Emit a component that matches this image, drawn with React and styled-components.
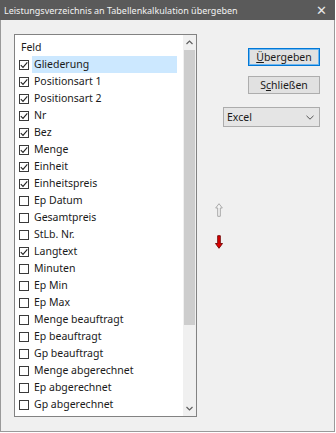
import React from "react";
import styled, { createGlobalStyle } from "styled-components";

const Global = createGlobalStyle`
  html, body { margin: 0; padding: 0; background: #ffffff; }
  body { font-family: "Noto Sans", "Open Sans", sans-serif; }
`;

const Window = styled.div`
  width: 335px;
  height: 432px;
  box-sizing: border-box;
  background: #f0f0f0;
  border: 1px solid #9a9a9a;
  border-top: none;
  display: flex;
  flex-direction: column;
`;

const TitleBar = styled.div`
  height: 20px;
  margin: 0 -1px;
  background: #5a5a5a;
  color: #f2f2f2;
  font-size: 9px;
  display: flex;
  align-items: center;
  justify-content: space-between;
  padding: 0 8px 0 4px;
`;

const Close = styled.span`
  font-size: 13px;
  color: #e8e8e8;
  line-height: 1;
`;

const Body = styled.div`
  flex: 1;
  display: flex;
  padding: 14px 0 0 13px;
`;

const ListBox = styled.div`
  width: 183px;
  height: 383px;
  box-sizing: border-box;
  border: 1px solid #828282;
  background: #ffffff;
  display: flex;
`;

const List = styled.div`
  flex: 1;
  padding: 3px 0 0 4px;
`;

const Header = styled.div`
  height: 18px;
  font-size: 10.5px;
  color: #1a1a1a;
  padding-left: 2px;
  display: flex;
  align-items: center;
`;

const Row = styled.div`
  height: 17px;
  display: flex;
  align-items: center;
  font-size: 10.5px;
  color: #1a1a1a;
`;

const Box = styled.span`
  width: 10px;
  height: 10px;
  box-sizing: border-box;
  border: 1px solid #3a3a3a;
  background: #ffffff;
  display: flex;
  align-items: center;
  justify-content: center;
  margin-right: 3px;
`;

const Label = styled.span`
  flex: 1;
  height: 17px;
  line-height: 17px;
  padding-left: 2px;
  margin-right: 6px;
  background: ${(p) => (p.$selected ? "#cce8ff" : "transparent")};
`;

const ScrollBar = styled.div`
  width: 13px;
  background: #f0f0f0;
  display: flex;
  flex-direction: column;
`;

const ScrollArrow = styled.div`
  height: 15px;
  display: flex;
  align-items: center;
  justify-content: center;
`;

const Thumb = styled.div`
  height: 275px;
  margin: 0 1px;
  background: #cdcdcd;
`;

const Track = styled.div`
  flex: 1;
`;

const Side = styled.div`
  width: 110px;
  margin-left: 13px;
  padding-top: 14px;
  display: flex;
  flex-direction: column;
`;

const Button = styled.div`
  align-self: flex-end;
  width: 72px;
  height: 18px;
  box-sizing: border-box;
  border: 1px solid ${(p) => (p.$default ? "#0078d7" : "#adadad")};
  box-shadow: ${(p) => (p.$default ? "inset 0 0 0 1px #6fb6ef" : "none")};
  background: #e1e1e1;
  font-size: 10.5px;
  color: #1a1a1a;
  display: flex;
  align-items: center;
  justify-content: center;
  margin-bottom: ${(p) => p.$gap || 0}px;
  u { text-decoration: underline; text-underline-offset: 1px; }
`;

const Select = styled.div`
  align-self: flex-end;
  width: 97px;
  height: 20px;
  box-sizing: border-box;
  border: 1px solid #acacac;
  background: #e5e5e5;
  font-size: 10.5px;
  color: #1a1a1a;
  display: flex;
  align-items: center;
  justify-content: space-between;
  padding: 0 5px 0 3px;
`;

const Arrows = styled.div`
  display: flex;
  flex-direction: column;
  align-items: flex-start;
  padding-left: 5px;
  margin-top: 76px;
  gap: 18px;
`;

const fields = [
  ["Gliederung", true],
  ["Positionsart 1", true],
  ["Positionsart 2", true],
  ["Nr", true],
  ["Bez", true],
  ["Menge", true],
  ["Einheit", true],
  ["Einheitspreis", true],
  ["Ep Datum", false],
  ["Gesamtpreis", false],
  ["StLb. Nr.", false],
  ["Langtext", true],
  ["Minuten", false],
  ["Ep Min", false],
  ["Ep Max", false],
  ["Menge beauftragt", false],
  ["Ep beauftragt", false],
  ["Gp beauftragt", false],
  ["Menge abgerechnet", false],
  ["Ep abgerechnet", false],
  ["Gp abgerechnet", false],
];

const Check = () => (
  <svg width="8" height="8" viewBox="0 0 8 8">
    <path d="M0.8 4.2 L3 6.4 L7.3 1.4" fill="none" stroke="#222" strokeWidth="1.1" />
  </svg>
);

const Chevron = ({ up }) => (
  <svg width="7" height="5" viewBox="0 0 7 5">
    <path d={up ? "M0.5 4 L3.5 1 L6.5 4" : "M0.5 1 L3.5 4 L6.5 1"} fill="none" stroke="#606060" strokeWidth="1.2" />
  </svg>
);

export default function App() {
  return (
    <>
      <Global />
      <Window>
        <TitleBar>
          <span>Leistungsverzeichnis an Tabellenkalkulation übergeben</span>
          <Close>✕</Close>
        </TitleBar>
        <Body>
          <ListBox>
            <List>
              <Header>Feld</Header>
              {fields.map(([name, checked], i) => (
                <Row key={name}>
                  <Box>{checked && <Check />}</Box>
                  <Label $selected={i === 0}>{name}</Label>
                </Row>
              ))}
            </List>
            <ScrollBar>
              <ScrollArrow>
                <Chevron up />
              </ScrollArrow>
              <Thumb />
              <Track />
              <ScrollArrow>
                <Chevron />
              </ScrollArrow>
            </ScrollBar>
          </ListBox>
          <Side>
            <Button $default $gap={10}>
              <span><u>Ü</u>bergeben</span>
            </Button>
            <Button $gap={13}>
              <span>S<u>c</u>hließen</span>
            </Button>
            <Select>
              <span>Excel</span>
              <svg width="8" height="5" viewBox="0 0 8 5">
                <path d="M0.5 0.8 L4 4.2 L7.5 0.8" fill="none" stroke="#555" strokeWidth="1" />
              </svg>
            </Select>
            <Arrows>
              <svg width="8" height="14" viewBox="0 0 8 14">
                <path d="M4 0.7 L7.3 5 L5.3 5 L5.3 13.3 L2.7 13.3 L2.7 5 L0.7 5 Z" fill="#f4f4f4" stroke="#a8a8a8" strokeWidth="1" />
              </svg>
              <svg width="8" height="14" viewBox="0 0 8 14">
                <path d="M2.7 0.7 L5.3 0.7 L5.3 8.5 L7.5 8.5 L4 13.3 L0.5 8.5 L2.7 8.5 Z" fill="#e00000" stroke="#700000" strokeWidth="0.9" />
              </svg>
            </Arrows>
          </Side>
        </Body>
      </Window>
    </>
  );
}
